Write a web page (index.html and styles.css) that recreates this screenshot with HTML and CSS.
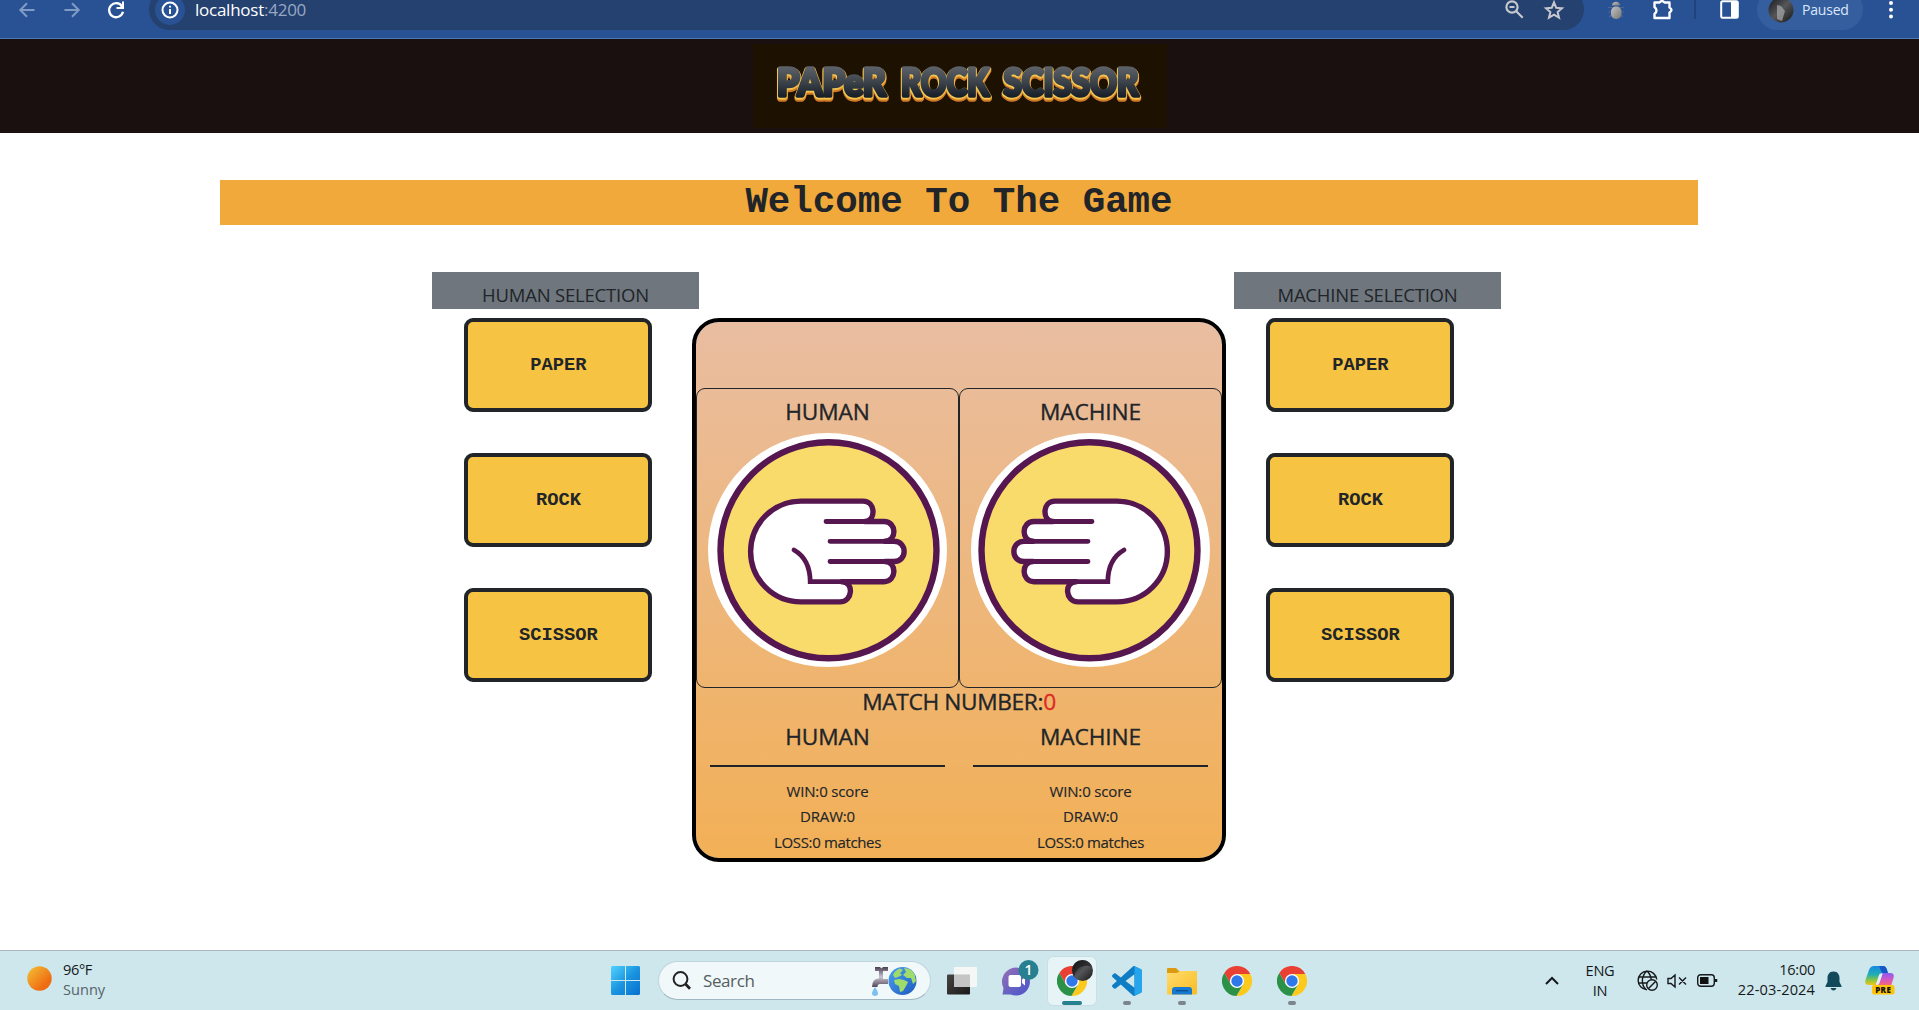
FILE: index.html
```html
<!DOCTYPE html>
<html lang="en">
<head>
<meta charset="utf-8">
<title>Paper Rock Scissor</title>
<link rel="stylesheet" href="styles.css">
</head>
<body>
<svg class="defs" width="0" height="0" aria-hidden="true">
  <defs>
    <linearGradient id="sun" x1="0" y1="0" x2="1" y2="1"><stop offset=".1" stop-color="#f2b632"/><stop offset=".75" stop-color="#ef6c11"/></linearGradient>
    <linearGradient id="win" x1="0" y1="0" x2="1" y2="1"><stop offset="0" stop-color="#4fd3fd"/><stop offset=".5" stop-color="#1b95e0"/><stop offset="1" stop-color="#0670cf"/></linearGradient>
    <linearGradient id="dark" x1="0" y1="0" x2="1" y2="1"><stop offset="0" stop-color="#454442"/><stop offset="1" stop-color="#1c1b1a"/></linearGradient>
    <linearGradient id="chat" x1="0" y1="0" x2="1" y2="1"><stop offset="0" stop-color="#9a70b3"/><stop offset=".6" stop-color="#6160c4"/><stop offset="1" stop-color="#5053c9"/></linearGradient>
    <linearGradient id="folder" x1="0" y1="0" x2="1" y2="1"><stop offset="0" stop-color="#ffdc6e"/><stop offset="1" stop-color="#f9bc22"/></linearGradient>
    <linearGradient id="earth" x1="0" y1="0" x2="1" y2="1"><stop offset="0" stop-color="#4da2f3"/><stop offset="1" stop-color="#1c58bd"/></linearGradient>
    <linearGradient id="steel" x1="0" y1="0" x2="0" y2="1"><stop offset="0" stop-color="#4a3f50"/><stop offset=".5" stop-color="#c9c3d0"/><stop offset="1" stop-color="#514758"/></linearGradient>
    <linearGradient id="avatar" x1="0" y1="0" x2="1" y2="1"><stop offset="0" stop-color="#15171b"/><stop offset=".5" stop-color="#55565a"/><stop offset="1" stop-color="#161616"/></linearGradient>
    <linearGradient id="bug" x1="0" y1="0" x2="1" y2="1"><stop offset="0" stop-color="#c3c3c3"/><stop offset="1" stop-color="#777"/></linearGradient>
    <linearGradient id="copA" x1="0" y1="0" x2="0" y2="1"><stop offset="0" stop-color="#1688e6"/><stop offset=".45" stop-color="#22aeb4"/><stop offset=".75" stop-color="#8cc63f"/><stop offset="1" stop-color="#f5c518"/></linearGradient>
    <linearGradient id="copB" x1="0" y1="0" x2="0" y2="1"><stop offset="0" stop-color="#8a5cf0"/><stop offset=".5" stop-color="#d457c4"/><stop offset="1" stop-color="#f96b6b"/></linearGradient>
    <linearGradient id="slate" gradientUnits="userSpaceOnUse" x1="0" y1="67" x2="0" y2="99"><stop offset="0" stop-color="#5d6168"/><stop offset=".5" stop-color="#3a4149"/><stop offset="1" stop-color="#121922"/></linearGradient>
    <symbol id="chrome" viewBox="-15 -15 30 30">
      <path fill="#ea4033" d="M-12.7-8A15 15 0 0 1 13.3-7H0L-6.06 3.5z"/>
      <path fill="#fdc91d" d="M13.3-7A15 15 0 0 1-.6 15L6.06 3.5 0-7z"/>
      <path fill="#2b9146" d="M-.6 15A15 15 0 0 1-12.7-8L-6.06 3.5 0 7 6.06 3.5z"/>
      <circle r="7.1" fill="#fff"/><circle r="5.7" fill="#2f78ea"/>
    </symbol>
    <symbol id="hand" viewBox="0 0 239 234">
      <ellipse cx="119.5" cy="117" rx="119.5" ry="117" fill="#fff"/>
      <circle cx="120.5" cy="117.3" r="108" fill="#f9db6b" stroke="#561650" stroke-width="6.400"/>
      <path fill="#fff" stroke="#561650" stroke-width="5.400" stroke-linejoin="round" d="M93 68.100H155C168 68.100 168 88.500 157 88.500H176C189 88.500 189 108.300 177 108.300H186C199.500 108.300 199.500 128.500 186 128.500H177C189 128.500 189 148.700 176 148.700H134C146 148.700 145 168.900 132 168.900H93A50.400 50.400 0 0 1 93 68.100Z"/>
      <path fill="none" stroke="#561650" stroke-width="4.800" stroke-linecap="round" d="M118 88.500H160M122 108.300H180M122 128.500H180M136 148.700H102.200Q102 126 86 117"/>
    </symbol>
  </defs>
</svg>

<div class="toolbar">
  <div class="toolbar-row">
    <svg class="nav back" width="16" height="16" viewBox="0 0 16 16"><path d="M15.500 8H1.500M8 1.300L1.300 8L8 14.700"/></svg>
    <svg class="nav forward" width="16" height="16" viewBox="0 0 16 16"><path d="M.500 8H14.500M8 1.300L14.700 8L8 14.700"/></svg>
    <svg class="nav reload" width="18" height="18" viewBox="0 0 18 18"><path d="M15 5.300A7 7 0 1 0 16 10.800"/><path class="tip" d="M17 .500V8H9.500V6H13L15 3.500V.500z"/></svg>
    <div class="urlbar">
      <span class="info"><svg width="18" height="18" viewBox="0 0 18 18"><circle cx="9" cy="9" r="7.500"/><path d="M9 8V13M9 4.800V6.500"/></svg></span>
      <span class="url">localhost<span class="port">:4200</span></span>
      <svg class="zoomout" width="19" height="19" viewBox="0 0 19 19"><circle cx="7" cy="7" r="5.600"/><path d="M11 11L17.700 17.700M4.500 7H9.500"/></svg>
      <svg class="star" width="20" height="20" viewBox="0 0 20 20"><path d="M10 2.300L12.200 7.700 18 8.200 13.600 12 15 17.600 10 14.600 5 17.600 6.400 12 2 8.200 7.800 7.700z"/></svg>
    </div>
    <svg class="bug" width="18" height="20" viewBox="0 0 18 20"><path d="M1 7.500H17M1 12H17M2 17L5 14.500M16 17L13 14.500" stroke="#4d658f" stroke-width="1.200"/><path d="M5 5.500C5 .500 13 .500 13 5.500z" fill="url(#bug)"/><rect x="4" y="6.500" width="10.500" height="12.500" rx="5" fill="url(#bug)"/></svg>
    <svg class="puzzle" width="22" height="22" viewBox="0 0 22 22"><path d="M2.500 3.500H7.500Q10 .500 12.500 3.500H17.500V8.500Q21.500 11 17.500 13.500V19H2.500V15Q6.500 11.500 2.500 8z"/></svg>
    <i class="divider"></i>
    <svg class="panel" width="19" height="19" viewBox="0 0 19 19"><rect x="1.200" y="1.200" width="16.600" height="16.600" rx="1.500"/><path d="M11 1H18V18H11z"/></svg>
    <div class="profile">
      <svg width="26" height="26" viewBox="0 0 26 26"><circle cx="13" cy="13" r="12.500" fill="url(#avatar)"/><path d="M9 8L13 9 17 14 14 24 9 22z" fill="#aaa" opacity=".7"/></svg>
      <span>Paused</span>
    </div>
    <svg class="dots" width="6" height="20" viewBox="0 0 6 20"><circle cx="3" cy="3" r="2"/><circle cx="3" cy="9.700" r="2"/><circle cx="3" cy="16.400" r="2"/></svg>
  </div>
</div>

<header class="header">
  <svg class="logo" width="414" height="84" viewBox="752 44 414 84">
    <g class="logo-face">
      <text x="776" y="95.500" textLength="109" lengthAdjust="spacingAndGlyphs">PAPeR</text>
      <text x="900" y="95.500" textLength="88" lengthAdjust="spacingAndGlyphs">ROCK</text>
      <text x="1002.500" y="95.500" textLength="135" lengthAdjust="spacingAndGlyphs">SCISSOR</text>
    </g>
  </svg>
</header>

<main class="page">
  <h1 class="welcome">Welcome To The Game</h1>
  <div class="game">
    <section class="choices">
      <div class="choices-title">HUMAN SELECTION</div>
      <button class="choice">PAPER</button>
      <button class="choice">ROCK</button>
      <button class="choice">SCISSOR</button>
    </section>
    <section class="board">
      <div class="players">
        <div class="player"><h2>HUMAN</h2><svg width="239" height="234"><use href="#hand"/></svg></div>
        <div class="player machine"><h2>MACHINE</h2><svg width="239" height="234"><use href="#hand"/></svg></div>
      </div>
      <div class="match">MATCH NUMBER:<span>0</span></div>
      <div class="scores">
        <div class="score"><h2>HUMAN</h2><hr><p>WIN:0 score</p><p>DRAW:0</p><p class="loss">LOSS:0 matches</p></div>
        <div class="score"><h2>MACHINE</h2><hr><p>WIN:0 score</p><p>DRAW:0</p><p class="loss">LOSS:0 matches</p></div>
      </div>
    </section>
    <section class="choices right">
      <div class="choices-title">MACHINE SELECTION</div>
      <button class="choice">PAPER</button>
      <button class="choice">ROCK</button>
      <button class="choice">SCISSOR</button>
    </section>
  </div>
</main>

<footer class="taskbar">
  <div class="weather">
    <svg width="25" height="25" viewBox="0 0 25 25"><circle cx="12.500" cy="12.500" r="12.200" fill="url(#sun)"/></svg>
    <div class="two-line"><span class="temp">96°F</span><span class="muted">Sunny</span></div>
  </div>
  <div class="apps">
    <svg width="29" height="29" viewBox="0 0 29 29"><path fill="url(#win)" d="M1 0H14V14H0V1zM15 0H28L29 1V14H15zM0 15H14V29H1L0 28zM15 15H29V28L28 29H15z"/></svg>
    <div class="search">
      <svg width="20" height="20" viewBox="0 0 20 20"><circle cx="8.500" cy="8" r="6.900"/><path d="M13.500 13L18 17.700" stroke-width="2.800"/></svg>
      <span>Search</span>
      <svg class="promo" width="46" height="30" viewBox="0 0 46 30"><path fill="url(#steel)" d="M4 1H9L10.500 2.500 12 1H17V5H12V13H17V18H9Q6.500 18 6.500 21H1Q1 12.500 8 12.500V5H4z"/><path fill="#7fc0f2" d="M4 21Q10 29.500 4 30-2 29.500 4 21z"/><circle cx="31.500" cy="15" r="14" fill="url(#earth)"/><path fill="#a0dc6c" d="M22 9Q24 4 29 2.500L32 4 29 7 31 9 27 11 24 12zM33 2Q40 2 43.500 8L45 15 42 18 40 12 36 12 32 9 35 6zM23 14L28 13 33 14 37 16 35 20 32 25 29 26 28 20 24 18z"/></svg>
    </div>
    <div class="tiles">
      <svg class="tile" viewBox="0 0 48 48"><rect x="9" y="17.500" width="23" height="20" rx="1" fill="url(#dark)"/><rect x="16" y="10" width="23" height="20" rx="1" fill="#f7f7f7" opacity=".93"/><rect x="16" y="17.500" width="16" height="12.500" fill="#c5c5c5"/></svg>
      <svg class="tile" viewBox="-.500 0 48 48"><path fill="url(#chat)" d="M9 37.500L10 31A14 14 0 1 1 17 37.500z"/><rect x="15" y="18" width="12.500" height="12" rx="2" fill="#fff"/><path d="M28.500 22.500L31.500 20V28.500L28.500 26z" fill="#fff"/><circle cx="35" cy="13" r="10" fill="#26808f"/><text class="badge" x="35" y="17.800">1</text></svg>
      <svg class="tile active" viewBox="0 0 48 48"><use href="#chrome" x="9" y="9" width="30" height="30"/><circle cx="34.500" cy="13.500" r="10.500" fill="url(#avatar)"/><path d="M26 20Q28 10 36 9T44 11Q42 3 34.500 3 24 4 24 14z" fill="#111" opacity=".55"/><rect x="14" y="44" width="20" height="4" rx="2" fill="#26808f"/></svg>
      <svg class="tile" viewBox="0 0 48 48"><g transform="translate(9 9) scale(1.250)"><path fill="#0e7dc4" d="M23.150 2.587L18.210.210a1.494 1.494 0 0 0-1.705.290l-9.460 8.630-4.120-3.128a.999.999 0 0 0-1.276.057L.327 7.261A1 1 0 0 0 .326 8.740L3.899 12 .326 15.260a1 1 0 0 0 .001 1.479L1.650 17.940a.999.999 0 0 0 1.276.057l4.120-3.128 9.460 8.630a1.492 1.492 0 0 0 1.704.290l4.942-2.377A1.500 1.500 0 0 0 24 20.060V3.939a1.500 1.500 0 0 0-.850-1.352zm-5.146 14.861L10.826 12l7.178-5.448v10.896z"/><path fill="#27a4ee" d="M18 .150L23.150 2.587Q24 3 24 3.939V20.060Q24 21 23.150 21.400L18 23.850z"/></g><rect x="20" y="44" width="8" height="4" rx="2" fill="#7b858b"/></svg>
      <svg class="tile" viewBox="0 0 48 48"><path fill="#dc9a10" d="M9 12Q9 11 10 11H18L21 14H38Q39 14 39 16V20H9z"/><path fill="url(#folder)" d="M9 16H19L22 14H38Q39 14 39 15V36.500Q39 37.500 38 37.500H10Q9 37.500 9 36.500z"/><path fill="#1579cf" d="M14 37.500V33Q14 30 17 30H31Q34 30 34 33V37.500z"/><path d="M18 33.700H30" stroke="#0d4f92" stroke-width="1.300"/><rect x="20" y="44" width="8" height="4" rx="2" fill="#7b858b"/></svg>
      <svg class="tile" viewBox="0 0 48 48"><use href="#chrome" x="9" y="9" width="30" height="30"/></svg>
      <svg class="tile" viewBox="0 0 48 48"><use href="#chrome" x="9" y="9" width="30" height="30"/><rect x="20" y="44" width="8" height="4" rx="2" fill="#7b858b"/></svg>
    </div>
  </div>
  <div class="tray">
    <svg class="chevron" width="14" height="10" viewBox="0 0 14 10"><path d="M1 8L7 2L13 8"/></svg>
    <div class="two-line lang"><span>ENG</span><span>IN</span></div>
    <svg class="line globe" width="21" height="21" viewBox="0 0 21 21"><path d="M10 19.700A9.300 9.300 0 1 1 19.700 9.500M1.700 7H18.500M1.700 13H10M10 1C4 6 4 15 9 19.500M10 1Q14 5 14.200 9.500"/><circle cx="15" cy="15" r="5.300"/><path d="M11.500 18.500L18.500 11.500"/></svg>
    <svg class="line sound" width="20" height="16" viewBox="0 0 20 16"><path d="M1 5.500H4L8 2V14L4 10.500H1zM12 4.500L19 11.500M19 4.500L12 11.500"/></svg>
    <svg class="line battery" width="21" height="13" viewBox="0 0 21 13"><rect x=".700" y=".700" width="16.600" height="11.600" rx="3"/><rect x="3" y="3" width="8.500" height="7" fill="#111" stroke="none"/><path d="M19 5V8" stroke-width="2.500"/></svg>
    <div class="two-line clock"><span class="time">16:00</span><span>22-03-2024</span></div>
    <svg class="bell" width="17" height="20" viewBox="0 0 17 20"><path fill="#134a5b" d="M8.500.500C13 .500 14.500 4 14.500 7V11L16.500 15V16H.500V15L2.500 11V7C2.500 4 4 .500 8.500.500zM5.500 17H11.500Q10.500 19.500 8.500 19.500T5.500 17z"/></svg>
    <svg class="copilot" width="30" height="29" viewBox="0 0 30 29"><path fill="url(#copA)" d="M9 0H18Q21 0 22 4L23 7H17Q15 7 14 10L11 19H4Q-1 19 .500 14L4 4Q5.500 0 9 0z"/><path fill="#1757c8" d="M14 0H18Q21 0 22 4L23 7H17z"/><path fill="url(#copB)" d="M18 7H25Q30 7 28.500 12L26 20H13L16 12Q17 7 18 7z"/><path fill="#e5eef8" d="M14.500 8H17.500L14 18H11z"/><rect x="7" y="19" width="22.500" height="9.500" rx="2" fill="#fdc40a"/><text class="pre" x="18.200" y="26.700">PRE</text></svg>
  </div>
</footer>
</body>
</html>
```
FILE: styles.css
```css
* { box-sizing: border-box; }
body {
  margin: 0;
  width: 1919px;
  height: 1010px;
  overflow: hidden;
  display: flex;
  flex-direction: column;
  background: #fff;
  color: #212529;
  font-family: "Open Sans", "Noto Sans", sans-serif;
}
svg { display: block; flex: none; overflow: visible; }
.defs { position: absolute; }
h1, h2, p { margin: 0; }

/* browser toolbar */
.toolbar { flex: none; height: 39px; overflow: hidden; background: #285294; border-bottom: 1px solid #4a76b8; }
.toolbar-row { display: flex; align-items: center; height: 41px; margin-top: -11px; }
.toolbar svg { fill: none; }
.nav { stroke: #809bc6; stroke-width: 2; }
.back { margin-left: 19px; }
.forward { margin-left: 29px; }
.reload { margin-left: 27px; stroke: #fff; stroke-width: 2.3; }
.reload .tip { fill: #fff; stroke: none; }
.urlbar {
  flex: none;
  width: 1435px; height: 41px; margin-left: 24px; padding-left: 6px;
  display: flex; align-items: center;
  background: #24416f; border-radius: 21px;
}
.info { width: 30px; height: 30px; border-radius: 50%; background: #285294; display: flex; align-items: center; justify-content: center; }
.info svg { stroke: #fff; stroke-width: 2; }
.url { margin-left: 10px; color: #fff; font-size: 17px; letter-spacing: -.25px; line-height: 30px; }
.port { color: #98a8c4; }
.zoomout { margin-left: auto; stroke: #c5c8cd; stroke-width: 2.2; }
.star { margin: 0 20px; stroke: #c5c8cd; stroke-width: 2; }
.bug { margin-left: 23px; }
.puzzle { margin-left: 27px; stroke: #fff; stroke-width: 2.4; stroke-linejoin: round; }
.divider { width: 2px; height: 19px; margin-left: 20px; background: #20437c; }
.panel { margin-left: 24px; stroke: #fff; stroke-width: 2; }
.panel path { fill: #fff; stroke: none; }
.profile {
  width: 106px; height: 41px; margin-left: 18px; padding-left: 11px;
  display: flex; align-items: center; gap: 8px;
  background: #345e9e; border-radius: 21px;
  color: #dbe6fb; font-size: 14px; letter-spacing: -.2px;
}
.toolbar .dots { margin-left: 25px; fill: #fff; }

/* game header */
.header { flex: none; height: 94px; display: flex; justify-content: center; align-items: center; background: #1a100f; }
.logo { background: #1d1102; overflow: hidden; }
.logo text { font-family: Lato, sans-serif; font-weight: 900; font-size: 37px; stroke-linejoin: round; }
.logo-face {
  fill: url(#slate); stroke: url(#slate); stroke-width: 3.6px;
  filter: drop-shadow(-1px 1px 0 #f3cc55) drop-shadow(1.5px 1.5px 0 #f0b440) drop-shadow(0 2.5px 0 #d07a28);
}

/* game */
.page { flex: 1; padding: 47px 221px 0 220px; }
.welcome {
  height: 45px; line-height: 45px; text-align: center;
  background: #f1a93b;
  font-family: "Courier New", "Liberation Mono", monospace; font-weight: 700; font-size: 37.5px; letter-spacing: -.02px;
}
.game { display: grid; grid-template-columns: 260px 534px 260px; padding: 47px 0 0 212px; }
.choices { display: flex; flex-direction: column; align-items: flex-start; padding-left: 32px; }
.choices.right { padding-left: 40px; }
.choices-title {
  width: 267px; height: 37px; margin: 0 0 9px -32px; padding-top: 9px;
  line-height: 28px; text-align: center; white-space: nowrap;
  font-size: 18.5px; letter-spacing: -.2px; background: #6f767d;
}
.choices.right .choices-title { margin-left: -32px; }
.choice {
  width: 188px; height: 94px; margin-bottom: 41px; padding: 0 0 0 1px;
  border: 4px solid #212529; border-radius: 9px; background: #f6c342; color: #212529;
  font: 700 18.75px "Courier New", "Liberation Mono", monospace;
}
.board {
  width: 534px; height: 544px; margin-top: 46px; padding-top: 66px;
  border: 4px solid #000; border-radius: 27px;
  background: linear-gradient(#e9bda1, #f2b056) padding-box;
}
.board h2, .match { font-size: 22.7px; font-weight: 400; -webkit-text-stroke: .35px; }
.board h2 { height: 44px; line-height: 46px; text-align: center; letter-spacing: -.1px; }
.players { display: grid; grid-template-columns: 1fr 1fr; }
.player { height: 300px; border: 1px solid #212529; border-radius: 9px; padding-left: 11px; }
.player h2 { margin-left: -11px; }
.machine svg { transform: scaleX(-1); }
.match { height: 26px; line-height: 28px; text-align: center; letter-spacing: -.35px; }
.match span { color: #dd2c24; }
.scores { display: grid; grid-template-columns: 1fr 1fr; }
.score { padding: 0 14px; text-align: center; }
.score hr { height: 2px; margin: 7px 0 11.5px; border: 0; background: #212529; }
.score p { font-size: 15px; line-height: 25.5px; letter-spacing: -.15px; -webkit-text-stroke: .15px; }
.score .loss { letter-spacing: -.35px; }

/* windows taskbar */
.taskbar {
  flex: none; height: 60px;
  display: grid; grid-template-columns: 611px 886px 1fr; align-items: center;
  background: #cee7ed; border-top: 1px solid #a9b4be; color: #15191b;
}
.weather, .apps, .tray, .tiles { display: flex; align-items: center; }
.weather { padding-left: 27px; gap: 11px; position: relative; top: -2px; }
.two-line { display: flex; flex-direction: column; font-size: 14.6px; line-height: 20px; white-space: nowrap; }
.temp { letter-spacing: -.4px; }
.muted { color: #556367; }
.search {
  width: 273px; height: 39px; margin-left: 18px; padding: 0 13px 0 13px;
  display: flex; align-items: center;
  background: #f0f8fa; border: 1px solid #bdd5dc; border-bottom-color: #9fb7c0; border-radius: 20px;
  color: #555e60; font-size: 17px;
}
.search > svg:first-child { fill: none; stroke: #222; stroke-width: 2; }
.search span { margin-left: 11px; letter-spacing: -.4px; }
.promo { margin-left: auto; }
.tiles { margin-left: 7px; gap: 7px; }
.tile { width: 48px; height: 48px; }
.active { background: #e6f3f7; border-radius: 5px; box-shadow: 0 0 0 .5px #c3d7dd; }
.badge { fill: #fff; font: 600 14px "Open Sans", sans-serif; text-anchor: middle; }
.chevron { margin-left: 48px; fill: none; stroke: #15191b; stroke-width: 2; }
.lang { width: 40px; margin-left: 21px; text-align: center; letter-spacing: -.3px; position: relative; top: -1px; }
.line { fill: none; stroke: #15191b; stroke-width: 1.4; }
.globe { margin-left: 17px; }
.sound { margin-left: 9px; }
.battery { margin-left: 10px; }
.clock { width: 88px; margin-left: 9px; text-align: right; position: relative; top: -2px; }
.clock span { letter-spacing: .1px; }
.clock .time { letter-spacing: -.3px; }
.bell { margin-left: 10px; }
.copilot { margin-left: 23px; }
.pre { fill: #111; font: 800 8px "Open Sans", sans-serif; text-anchor: middle; letter-spacing: .4px; }
```
